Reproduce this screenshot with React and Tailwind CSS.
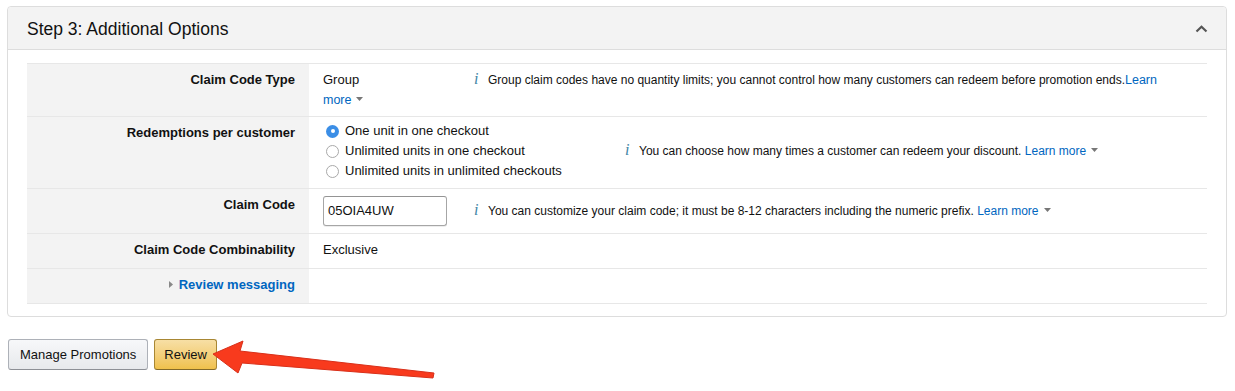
const Caret = () => (
  <svg width="7" height="4" viewBox="0 0 7 4" className="ml-[5px] inline-block align-[3px]">
    <path d="M0 0h7L3.5 4z" fill="#777" />
  </svg>
);

const InfoI = () => (
  <span className="mr-[8px] inline-block w-[6px] font-['Liberation_Serif',serif] text-[16px] italic leading-[16px] text-[#3f86a6]">
    i
  </span>
);

function Radio({ checked, label }) {
  return (
    <div className="flex h-[20px] items-center">
      {checked ? (
        <span className="mr-[6px] flex h-[13px] w-[13px] items-center justify-center rounded-full bg-[#3b8ee6]">
          <span className="h-[4px] w-[4px] rounded-full bg-white" />
        </span>
      ) : (
        <span className="mr-[6px] h-[13px] w-[13px] rounded-full border border-[#a9a9a9] bg-white" />
      )}
      <span>{label}</span>
    </div>
  );
}

function Row({ label, children, first, cell = "pt-[6px] pb-[8px]" }) {
  return (
    <div className={`flex ${first ? "" : "border-t border-[#e7e7e7]"}`}>
      <div className="w-[282px] shrink-0 bg-[#f3f3f3] pt-[6px] pr-[14px] text-right font-bold leading-[20px]">
        {label}
      </div>
      <div className={`flex-1 pl-[14px] leading-[20px] ${cell}`}>{children}</div>
    </div>
  );
}

export default function App() {
  return (
    <div className="relative min-h-[391px] bg-white font-['Liberation_Sans',Arial,sans-serif] text-[13px] text-[#111]">
      <div className="ml-[7px] mr-[8px] pt-[6px]">
        <div className="rounded-[4px] border border-[#dddddd]">
          <div className="flex h-[43px] items-center justify-between rounded-t-[4px] border-b border-[#dddddd] bg-[#f3f3f3] pl-[19px] pr-[18px] pt-[2px]">
            <span className="text-[17.5px]">Step 3: Additional Options</span>
            <svg width="13" height="8" viewBox="0 0 13 8">
              <path d="M1.5 6.5L6.5 1.8l5 4.7" fill="none" stroke="#555" strokeWidth="2.2" />
            </svg>
          </div>

          <div className="px-[19px] pb-[12px] pt-[13px]">
            <div className="border-y border-[#e7e7e7]">
              <Row label="Claim Code Type" first cell="pt-[6px] pb-[6px]">
                <div className="flex">
                  <span className="w-[151px] shrink-0">Group</span>
                  <span className="whitespace-nowrap text-[12px]">
                    <InfoI />
                    Group claim codes have no quantity limits; you cannot control how many customers can redeem before promotion ends.
                    <span className="text-[12.5px] text-[#0066c0]">Learn</span>
                  </span>
                </div>
                <div className="text-[12.5px] text-[#0066c0]">
                  more
                  <Caret />
                </div>
              </Row>

              <Row label="Redemptions per customer" cell="pt-[4px] pb-[7px]">
                <div className="flex items-center">
                  <div className="w-[302px] shrink-0 pl-[3px]">
                    <Radio checked label="One unit in one checkout" />
                    <Radio label="Unlimited units in one checkout" />
                    <Radio label="Unlimited units in unlimited checkouts" />
                  </div>
                  <span className="text-[12px]">
                    <InfoI />
                    You can choose how many times a customer can redeem your discount.{" "}
                    <span className="text-[#0066c0]">
                      Learn more
                      <Caret />
                    </span>
                  </span>
                </div>
              </Row>

              <Row label="Claim Code" cell="pt-[7px] pb-[7px]">
                <div className="flex items-center">
                  <div className="w-[151px] shrink-0">
                    <div className="flex h-[30px] w-[124px] items-center rounded-[3px] border border-[#a6a6a6] border-t-[#949494] px-[4px] shadow-[inset_0_1px_0_rgba(255,255,255,0.5),0_1px_0_rgba(0,0,0,0.07)]">
                      05OIA4UW
                    </div>
                  </div>
                  <span className="text-[12px]">
                    <InfoI />
                    You can customize your claim code; it must be 8-12 characters including the numeric prefix.{" "}
                    <span className="text-[#0066c0]">
                      Learn more
                      <Caret />
                    </span>
                  </span>
                </div>
              </Row>

              <Row label="Claim Code Combinability">Exclusive</Row>

              <Row
                label={
                  <span className="text-[#0066c0]">
                    <svg width="4" height="7" viewBox="0 0 4 7" className="mr-[6px] inline-block align-[1px]">
                      <path d="M0 0l4 3.5L0 7z" fill="#888" />
                    </svg>
                    Review messaging
                  </span>
                }
              >
                <span>&nbsp;</span>
              </Row>
            </div>
          </div>
        </div>

        <div className="mt-[22px] flex gap-[6px] pl-[1px]">
          <button className="h-[31px] rounded-[3px] border border-[#adb1b8] border-b-[#8d9096] bg-gradient-to-b from-[#f7f8fa] to-[#e7e9ec] px-[11px] text-[13px] text-[#111]">
            Manage Promotions
          </button>
          <button className="h-[31px] rounded-[3px] border border-[#a88734] border-b-[#846a29] bg-gradient-to-b from-[#f7dfa5] to-[#f0c14b] px-[9px] text-[13px] text-[#111]">
            Review
          </button>
        </div>
      </div>

      <svg className="pointer-events-none absolute left-0 top-0" width="1235" height="391">
        <polygon
          points="213,354 243,341 240,351 434,373 433,378 242,363 238,373"
          fill="#f83a1d"
          stroke="#d8301a"
          strokeWidth="1"
          strokeLinejoin="round"
        />
      </svg>
    </div>
  );
}
